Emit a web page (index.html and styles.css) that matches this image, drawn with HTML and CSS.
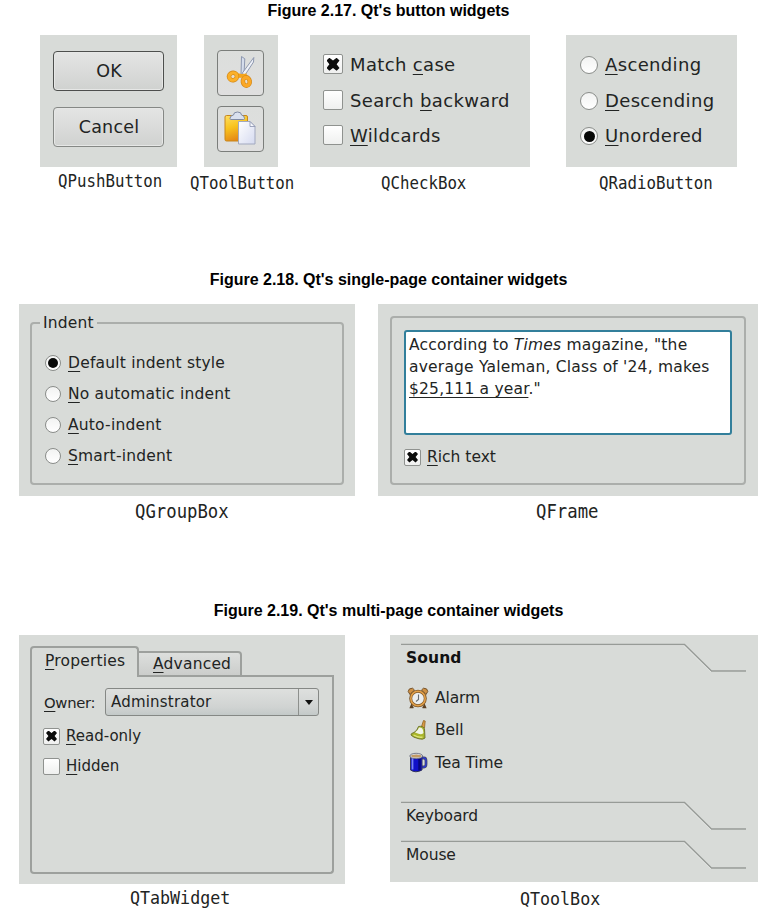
FILE: index.html
```html
<!DOCTYPE html>
<html lang="en">
<head>
<meta charset="utf-8">
<title>Qt widgets</title>
<link rel="stylesheet" href="styles.css">
</head>
<body>
<section class="figure fig-buttons">
  <h2>Figure 2.17. Qt's button widgets</h2>
  <div class="row">
    <div class="item push">
      <div class="panel">
        <div class="btn default">OK</div>
        <div class="btn">Cancel</div>
      </div>
      <div class="caption">QPushButton</div>
    </div>
    <div class="item tool">
      <div class="panel">
        <div class="toolbtn">
          <svg width="47" height="46" viewBox="0 0 47 46">
            <path d="M24.500 6.500l3.300 2.300-.8 15-3 1.700z" fill="#d5ddec" stroke="#8490a9" stroke-width=".9"/>
            <path d="M36.800 7.500l-.3 4.500-8.500 13-3-1.500z" fill="#eef1f8" stroke="#8490a9" stroke-width=".9"/>
            <path d="M19 23l6 1 5-.5-1 4-9 .5z" fill="#f5a51c"/>
            <ellipse cx="16" cy="26.500" rx="4" ry="3.700" fill="#e9dfcf" stroke="#d08618" stroke-width="4.500" transform="rotate(-15 16 26.500)"/>
            <ellipse cx="16" cy="26.500" rx="4" ry="3.700" fill="none" stroke="#fbb02a" stroke-width="3.200" transform="rotate(-15 16 26.500)"/>
            <ellipse cx="29.300" cy="31.500" rx="3.400" ry="4.200" fill="#e9dfcf" stroke="#d08618" stroke-width="4.500" transform="rotate(-10 29.300 31.500)"/>
            <ellipse cx="29.300" cy="31.500" rx="3.400" ry="4.200" fill="none" stroke="#fba826" stroke-width="3.200" transform="rotate(-10 29.300 31.500)"/>
          </svg>
        </div>
        <div class="toolbtn">
          <svg width="47" height="46" viewBox="0 0 47 46">
            <defs>
              <linearGradient id="board" x1="0" y1="0" x2=".3" y2="1"><stop offset="0" stop-color="#ffdf62"/><stop offset=".5" stop-color="#f8c31e"/><stop offset="1" stop-color="#e58a16"/></linearGradient>
              <linearGradient id="sheet" x1="0" y1="0" x2="1" y2="1"><stop offset="0" stop-color="#fff"/><stop offset="1" stop-color="#d5daf0"/></linearGradient>
            </defs>
            <rect x="8" y="9.500" width="22.500" height="25.500" rx="1.500" fill="url(#board)" stroke="#c7861d"/>
            <path d="M13 12.500q0-3 3.500-3.500 0-3 4-3t4 3q3 .5 3 3.500 0 1-1 1H14q-1 0-1-1z" fill="#d9e0ee" stroke="#7f8aa3"/>
            <path d="M21.500 15.500H33l5 5v17.500H21.500z" fill="url(#sheet)" stroke="#a2a9bf"/>
            <path d="M33 15.500v5h5z" fill="#f7f8fd" stroke="#8992ad" stroke-width=".8"/>
          </svg>
        </div>
      </div>
      <div class="caption">QToolButton</div>
    </div>
    <div class="item check">
      <div class="panel options">
        <div class="option"><span class="box on"></span><span>Match <u>c</u>ase</span></div>
        <div class="option"><span class="box"></span><span>Search <u>b</u>ackward</span></div>
        <div class="option"><span class="box"></span><span><u>W</u>ildcards</span></div>
      </div>
      <div class="caption">QCheckBox</div>
    </div>
    <div class="item radio">
      <div class="panel options">
        <div class="option"><span class="dot"></span><span><u>A</u>scending</span></div>
        <div class="option"><span class="dot"></span><span><u>D</u>escending</span></div>
        <div class="option"><span class="dot on"></span><span><u>U</u>nordered</span></div>
      </div>
      <div class="caption">QRadioButton</div>
    </div>
  </div>
</section>

<section class="figure fig-single">
  <h2>Figure 2.18. Qt's single-page container widgets</h2>
  <div class="row">
    <div class="item group">
      <div class="panel">
        <fieldset>
          <legend>Indent</legend>
          <div class="option"><span class="dot on"></span><span><u>D</u>efault indent style</span></div>
          <div class="option"><span class="dot"></span><span><u>N</u>o automatic indent</span></div>
          <div class="option"><span class="dot"></span><span><u>A</u>uto-indent</span></div>
          <div class="option"><span class="dot"></span><span><u>S</u>mart-indent</span></div>
        </fieldset>
      </div>
      <div class="caption">QGroupBox</div>
    </div>
    <div class="item frame">
      <div class="panel">
        <div class="framed">
          <div class="textedit">According to <i>Times</i> magazine, "the<br>average Yaleman, Class of '24, makes<br><u>$25,111 a year</u>."</div>
          <div class="option"><span class="box on"></span><span><u>R</u>ich text</span></div>
        </div>
      </div>
      <div class="caption">QFrame</div>
    </div>
  </div>
</section>

<section class="figure fig-multi">
  <h2>Figure 2.19. Qt's multi-page container widgets</h2>
  <div class="row">
    <div class="item tabs">
      <div class="panel">
        <div class="tabbar">
          <div class="tab active"><span><u>P</u>roperties</span></div>
          <div class="tab"><span><u>A</u>dvanced</span></div>
          <div class="tabfill"></div>
        </div>
        <div class="page">
          <div class="owner">
            <span class="label"><u>O</u>wner:</span>
            <div class="combo"><span class="value">Adminstrator</span><span class="arrow"></span></div>
          </div>
          <div class="option"><span class="box on"></span><span><u>R</u>ead-only</span></div>
          <div class="option"><span class="box"></span><span><u>H</u>idden</span></div>
        </div>
      </div>
      <div class="caption">QTabWidget</div>
    </div>
    <div class="item toolbox">
      <div class="panel">
        <div class="head open">
          <span>Sound</span>
          <svg class="edge" viewBox="0 0 345 29"><path d="M0 2.500H283L310 29H345" class="lo"/><path d="M0 1.500H283.500L310.500 28H345" class="hi"/></svg>
        </div>
        <div class="list">
          <div class="entry">
            <svg width="22" height="22" viewBox="0 0 22 22">
              <path d="M5 17l-1.500 3.500h3M17 17l1.500 3.500h-3" fill="#6b4a25" stroke="#5a4025" stroke-width="1.500"/>
              <path d="M1.200 4.500Q1.500 1 5.500 1.200L7.500 3 3 7.500zM20.800 4.500Q20.500 1 16.500 1.200L14.500 3 19 7.500z" fill="#cf9144" stroke="#77552d"/>
              <circle cx="11" cy="11.500" r="7.300" fill="#eceeee" stroke="#7b5527" stroke-width="3"/>
              <circle cx="11" cy="11.500" r="7.200" fill="none" stroke="#e2a04a" stroke-width="1.600"/>
              <path d="M11.500 7.500v5l-2.500 2" fill="none" stroke="#686d72" stroke-width="1.100"/>
            </svg>
            <span>Alarm</span>
          </div>
          <div class="entry">
            <svg width="22" height="22" viewBox="0 0 22 22">
              <path d="M14.500 7.500l2-6 1.700 .5-.7 7z" fill="#d79a43" stroke="#906225" stroke-width=".8"/>
              <path d="M11.500 7.500Q16 6.500 17.500 10L18 19q-2 2-6 .8Q6 18.500 4 16q-.5-1.500 3-2.500 3.500-2 4.500-6z" fill="#a9b52a" stroke="#72792f" stroke-width="1"/>
              <path d="M12 8.500q3.500-.5 4 2.500l.5 3q-2 2-5 .8L8 13.500q3-2 4-5z" fill="#f1f4e8"/>
              <path d="M6.500 16q5 3 9 2" fill="none" stroke="#dce477" stroke-width="1.300"/>
            </svg>
            <span>Bell</span>
          </div>
          <div class="entry">
            <svg width="22" height="22" viewBox="0 0 22 22">
              <path d="M14 6h3q2 0 2 3v3q0 3-2 3h-3" fill="none" stroke="#4b4d68" stroke-width="2.800"/>
              <path d="M14 6h3q2 0 2 3v3q0 3-2 3h-3" fill="none" stroke="#2c39d0" stroke-width="1.300"/>
              <path d="M3.500 4v14q5 3.500 11.500 0V4z" fill="#1010c8" stroke="#33355c"/>
              <path d="M5.500 6v11.500" stroke="#7583f4" stroke-width="1.800"/>
              <path d="M12.500 6v12.500" stroke="#07077c" stroke-width="2.500"/>
              <ellipse cx="9.200" cy="4" rx="5.700" ry="2.100" fill="#c39b64" stroke="#d7d9df" stroke-width="1.200"/>
              <ellipse cx="9.200" cy="4" rx="6.400" ry="2.700" fill="none" stroke="#555869" stroke-width=".7"/>
            </svg>
            <span>Tea Time</span>
          </div>
        </div>
        <div class="head">
          <span>Keyboard</span>
          <svg class="edge" viewBox="0 0 345 29"><path d="M0 2.500H283L310 29H345" class="lo"/><path d="M0 1.500H283.500L310.500 28H345" class="hi"/></svg>
        </div>
        <div class="head last">
          <span>Mouse</span>
          <svg class="edge" viewBox="0 0 345 29"><path d="M0 2.500H283L310 29H345" class="lo"/><path d="M0 1.500H283.500L310.500 28H345" class="hi"/></svg>
        </div>
      </div>
      <div class="caption">QToolBox</div>
    </div>
  </div>
</section>
</body>
</html>
```
FILE: styles.css
```css
* { box-sizing: border-box; }
body {
  margin: 0;
  width: 777px;
  height: 920px;
  overflow: hidden;
  background: #fff;
  color: #222423;
  font-family: "DejaVu Sans", sans-serif;
  font-size: 15.5px;
  letter-spacing: 0.2px;
  white-space: nowrap;
}
h2 {
  margin: 0;
  font: bold 16px/21px "Liberation Sans", sans-serif;
  letter-spacing: 0;
  color: #000;
  text-align: center;
}
u { text-decoration: underline 1px; text-underline-offset: 3px; text-decoration-skip-ink: none; }
.row { display: flex; align-items: flex-start; }
.panel { background: #d8dbd8; overflow: hidden; }
.caption {
  font: 18px/20px "DejaVu Sans Mono", monospace;
  letter-spacing: 0;
  transform-origin: 0 50%;
}

/* Controls */
.option { display: flex; align-items: center; }
.box {
  flex: none;
  width: 17px;
  height: 17px;
  margin-right: 6px;
  border: 1px solid #8f928f;
  border-radius: 2px;
  background: linear-gradient(#fff, #eff0ef);
  display: grid;
  place-items: center;
}
.box.on::before {
  content: "";
  width: 11px;
  height: 11px;
  background: #0b0c0b;
  clip-path: polygon(22% 0, 50% 22%, 78% 0, 100% 22%, 78% 50%, 100% 78%, 78% 100%, 50% 78%, 22% 100%, 0 78%, 22% 50%, 0 22%);
}
.dot {
  flex: none;
  width: 16px;
  height: 16px;
  margin-right: 7px;
  border: 1px solid #8a8d8a;
  border-radius: 50%;
  background: linear-gradient(#f2f3f2, #fff);
  display: grid;
  place-items: center;
}
.dot.on::before {
  content: "";
  width: 10px;
  height: 10px;
  border-radius: 50%;
  background: #080908;
}

/* Button widgets */
.fig-buttons { height: 269px; }
.fig-buttons .row { padding: 14px 0 0 40px; }
.fig-buttons .panel { height: 132px; }
.fig-buttons .caption { transform: scaleX(0.875); margin-top: 6px; }
.push { width: 137px; margin-right: 27px; }
.push .panel { padding: 16px 13px; display: flex; flex-direction: column; gap: 16px; }
.btn {
  height: 40px;
  border: 1px solid #858885;
  border-radius: 4px;
  background: linear-gradient(#e4e5e4, #d9dad9 55%, #d0d2d0);
  box-shadow: inset 0 0 0 1px #e6e7e6;
  font-size: 17.5px;
  line-height: 38px;
  padding-left: 1px;
  text-align: center;
}
.btn.default { border-color: #4d4f4d; }
.fig-buttons .push .caption { margin: 4px 0 0 18px; }
.tool { width: 74px; margin-right: 32px; }
.tool .panel { padding: 15px 13px; display: flex; flex-direction: column; gap: 10px; }
.toolbtn {
  width: 47px;
  height: 46px;
  border: 1px solid #7b7e7b;
  border-radius: 4px;
  background: linear-gradient(#dcdedc, #dfdfdf);
}
.toolbtn svg { display: block; margin: -1px; }
.tool .caption { margin-left: -14px; }
.options { font-size: 18px; letter-spacing: 0.35px; padding: 12px 13px; }
.options .option { height: 35.5px; }
.options .box { width: 20px; height: 20px; margin-top: -1px; margin-right: 7px; }
.options .box.on::before { width: 13px; height: 13px; }
.options .dot { width: 18px; height: 18px; margin-left: 1px; margin-right: 7px; margin-top: 1px; }
.options .dot.on::before { width: 11px; height: 11px; }
.check { width: 220px; margin-right: 36px; }
.check .caption { margin-left: 71px; }
.radio { width: 171px; }
.radio .caption { margin-left: 33px; }

/* Single-page containers */
.fig-single { height: 331px; }
.fig-single .row { padding: 14px 0 0 19px; }
.fig-single .panel { height: 192px; }
.fig-single .caption { font-size: 19px; transform: scaleX(0.91); margin-top: 5px; }
.group { width: 336px; margin-right: 23px; }
.group .panel { padding: 9px 11px; }
fieldset {
  margin: 0;
  height: 172px;
  padding: 15px 13px 0;
  border: 2px solid #abaeab;
  border-radius: 4px;
}
legend { height: 20px; line-height: 20px; padding: 0 3px; margin-left: -5px; }
.group .option { height: 30.8px; }
.group .caption { margin-left: 116px; }
.frame { width: 380px; }
.frame .panel { padding: 12px; }
.framed { height: 169px; padding: 12px; border: 2px solid #abaeab; border-radius: 4px; }
.textedit {
  height: 105px;
  padding: 1.5px 3px;
  border: 2px solid #327f9b;
  border-radius: 3px;
  background: #fff;
  line-height: 22px;
}
.frame .option { height: 22px; margin-top: 11px; letter-spacing: 0; }
.frame .caption { margin-left: 158px; }

/* Multi-page containers */
.fig-multi .row { padding: 14px 0 0 19px; }
.fig-multi .caption { font-size: 18.5px; transform: scaleX(0.9); margin-top: 4px; }
.tabs { width: 326px; margin-right: 45px; }
.tabs .panel { height: 249px; padding: 11px 11px 0; }
.tabbar { display: flex; align-items: flex-end; height: 31px; }
.tab {
  height: 26px;
  width: 103px;
  padding-left: 14px;
  line-height: 22px;
  border: solid #9da09d;
  border-width: 2px 2px 2px 0;
  border-radius: 0 4px 0 0;
  background: linear-gradient(#dddfdd, #cbcdcb);
}
.tab.active {
  height: 31px;
  width: 109px;
  padding-left: 13px;
  line-height: 26px;
  border-width: 2px 2px 0;
  border-radius: 4px 4px 0 0;
  background: #d8dbd8;
}
.tabfill { flex: 1; height: 2px; background: #9da09d; }
.page {
  height: 197px;
  padding: 11px 11px;
  border: 2px solid #9da09d;
  border-top: 0;
  border-radius: 0 0 4px 4px;
  font-size: 15px;
  letter-spacing: 0;
}
.owner { display: flex; align-items: center; margin-bottom: 5px; }
.owner .label { width: 62px; font-size: 14.8px; letter-spacing: -0.3px; padding-left: 1px; }
.combo {
  width: 214px;
  height: 28px;
  display: flex;
  border: 1px solid #858885;
  border-radius: 3px;
  background: linear-gradient(#dee0de, #d0d3d2 70%, #c3c9c8);
  line-height: 26px;
}
.value { flex: 1; padding-left: 5px; letter-spacing: 0.2px; }
.arrow { width: 20px; border-left: 1px solid #8d908d; display: grid; place-items: center; }
.arrow::before { content: ""; border: 4.5px solid transparent; border-top: 5px solid #111; border-bottom: 0; }
.page .option { height: 30px; }
.tabs .caption { margin-left: 111px; }
.toolbox { width: 368px; }
.toolbox .panel { height: 247px; padding: 8px 11px 0; }
.head { position: relative; height: 38.5px; padding: 3px 0 0 5px; line-height: 24px; letter-spacing: -0.1px; }
.head.open { font-weight: bold; height: 38px; color: #111; letter-spacing: 0.1px; }
.edge { position: absolute; left: 0; top: 0; width: 345px; height: 29px; fill: none; }
.edge .hi { stroke: #979b97; stroke-width: 1.3px; }
.edge .lo { stroke: #eceeec; stroke-width: 1px; }
.list { height: 120px; padding: 1px 0 0 6px; }
.entry { display: flex; align-items: center; gap: 6px; height: 32.3px; letter-spacing: -0.1px; }
.toolbox .caption { margin: 7px 0 0 130px; }
```
